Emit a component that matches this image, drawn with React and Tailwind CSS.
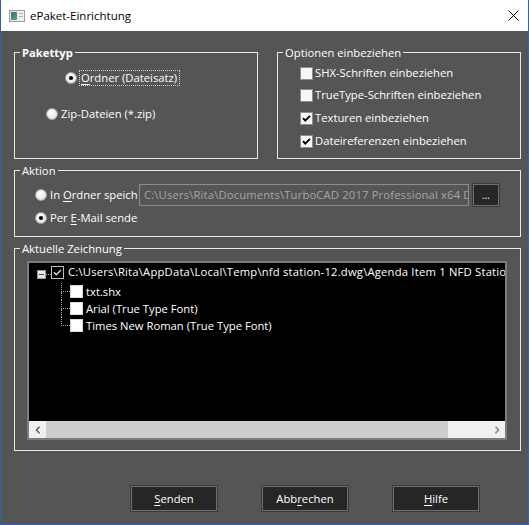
import React from "react";

function Radio({ checked }) {
  return (
    <svg width="12" height="12" viewBox="0 0 12 12" className="shrink-0">
      <defs>
        <radialGradient id="rg" cx="40%" cy="35%" r="70%">
          <stop offset="0%" stopColor="#ffffff" />
          <stop offset="100%" stopColor="#e2e2e2" />
        </radialGradient>
      </defs>
      <circle cx="6" cy="6" r="5.5" fill="url(#rg)" stroke="#9c9c9c" />
      {checked && <circle cx="6" cy="6" r="2.1" fill="#000" />}
    </svg>
  );
}

function Check({ checked }) {
  return (
    <svg width="13" height="13" viewBox="0 0 13 13" className="shrink-0">
      <rect x="0.5" y="0.5" width="12" height="12" fill="#f7f7f7" stroke="#8e8e8e" />
      {checked && (
        <path d="M3 6.2 L5.3 8.6 L10 3.8" fill="none" stroke="#000" strokeWidth="1.9" />
      )}
    </svg>
  );
}

function Group({ label, legendClass, className, children }) {
  return (
    <fieldset className={"border border-[#e8e8e8] " + className}>
      <legend className={"ml-[5px] px-[2px] leading-[15px] " + legendClass}>{label}</legend>
      {children}
    </fieldset>
  );
}

function Button({ children }) {
  return (
    <button className="w-[88px] h-[27px] bg-[#262626] border border-[#3a3a3a] shadow-[inset_0_0_0_1px_#6e6e6e] text-white leading-[25px] text-center">
      {children}
    </button>
  );
}

function ChildNode({ label, last }) {
  return (
    <div className="h-[17px] flex items-center">
      <div className="ml-[32px] w-[9px] h-full flex flex-col">
        <div className="h-[9px] border-l border-b border-dotted border-[#a8a8a8]" />
        {!last && <div className="flex-1 border-l border-dotted border-[#a8a8a8]" />}
      </div>
      <div className="w-[13px] h-[13px] bg-white border border-[#d8d8d8]" />
      <span className="ml-[3px] whitespace-nowrap leading-[16px]">{label}</span>
    </div>
  );
}

export default function App() {
  return (
    <div className="w-[529px] h-[525px] flex flex-col bg-[#555555] border-x border-b border-[#2b63b8] text-white text-[11.25px] font-['Open_Sans',sans-serif]">
      {/* title bar */}
      <div className="h-[31px] shrink-0 bg-white flex items-center pl-[8px] pr-[9px] text-black">
        <svg width="16" height="12" viewBox="0 0 16 12">
          <defs>
            <linearGradient id="ig" x1="0" y1="0" x2="1" y2="1">
              <stop offset="0%" stopColor="#2f6f7a" />
              <stop offset="100%" stopColor="#5fa48c" />
            </linearGradient>
          </defs>
          <rect x="0.5" y="0.5" width="15" height="11" fill="#eeeeee" stroke="#9a9a9a" />
          <rect x="2" y="2" width="6" height="8" fill="url(#ig)" />
          <rect x="10" y="3" width="4" height="1" fill="#b0b0b0" />
          <rect x="10" y="6" width="4" height="1" fill="#b0b0b0" />
        </svg>
        <span className="ml-[5px] text-[11.5px]">ePaket-Einrichtung</span>
        <svg className="ml-auto" width="11" height="11" viewBox="0 0 11 11">
          <path d="M0.5 0.5 L10.5 10.5 M10.5 0.5 L0.5 10.5" stroke="#000" strokeWidth="1" />
        </svg>
      </div>

      {/* dialog body */}
      <div className="flex-1 flex flex-col pl-[13px] pr-[7px]">
        <div className="flex gap-[19px] mt-[14px]">
          <Group label="Pakettyp" legendClass="font-bold" className="w-[244px] h-[114px]">
            <div className="mt-[10px] ml-[50px] flex items-center h-[16px]">
              <Radio checked />
              <span className="ml-[2px] border border-dotted border-[#cfcfcf] pl-px pr-[2px] leading-[14px]">
                <span className="underline underline-offset-2">O</span>rdner (Dateisatz)
              </span>
            </div>
            <div className="mt-[20px] ml-[31px] flex items-center h-[16px]">
              <Radio />
              <span className="ml-[3px] leading-[16px]">Zip-Dateien (*.zip)</span>
            </div>
          </Group>

          <Group label="Optionen einbeziehen" legendClass="" className="w-[244px] h-[114px]">
            <div className="mt-[5px] ml-[22px] flex items-center h-[16px]">
              <Check />
              <span className="ml-[2px]">SHX-Schriften einbeziehen</span>
            </div>
            <div className="mt-[6px] ml-[22px] flex items-center h-[16px]">
              <Check />
              <span className="ml-[2px]">TrueType-Schriften einbeziehen</span>
            </div>
            <div className="mt-[7px] ml-[22px] flex items-center h-[16px]">
              <Check checked />
              <span className="ml-[2px]">Texturen einbeziehen</span>
            </div>
            <div className="mt-[7px] ml-[22px] flex items-center h-[16px]">
              <Check checked />
              <span className="ml-[2px]">Dateireferenzen einbeziehen</span>
            </div>
          </Group>
        </div>

        <Group label="Aktion" legendClass="" className="mt-[4px] h-[74px]">
          <div className="mt-[5px] ml-[20px] flex items-center h-[24px]">
            <Radio />
            <span className="ml-[3px] w-[88px] shrink-0 overflow-hidden whitespace-nowrap">
              In <span className="underline underline-offset-2">O</span>rdner speichern
            </span>
            <div className="ml-[1px] w-[330px] shrink-0 h-[22px] border border-[#8c8c8c] pl-[4px] text-[#a6a6a6] leading-[20px] tracking-[0.15px] overflow-hidden whitespace-nowrap">
              C:\Users\Rita\Documents\TurboCAD 2017 Professional x64 Drawings
            </div>
            <button className="ml-[3px] w-[28px] h-[24px] shrink-0 bg-[#262626] border border-[#3a3a3a] shadow-[inset_0_0_0_1px_#6e6e6e] text-white text-[10px] leading-[20px]">
              ...
            </button>
          </div>
          <div className="mt-[3px] ml-[20px] flex items-center h-[16px]">
            <Radio checked />
            <span className="ml-[3px] w-[88px] overflow-hidden whitespace-nowrap">
              Per <span className="underline underline-offset-2">E</span>-Mail senden
            </span>
          </div>
        </Group>

        <Group label="Aktuelle Zeichnung" legendClass="" className="mt-[4px] h-[210px]">
          <div className="mt-[5px] ml-[12px] w-[480px] h-[179px] border-2 border-[#7c7c7c] bg-black flex flex-col overflow-hidden">
            {/* tree root */}
            <div className="h-[18px] flex items-start shrink-0">
              <div className="ml-[8px] mt-[7px] w-[9px] h-[9px] shrink-0 border border-[#939393] bg-[#e9e9e9] flex items-center justify-center">
                <div className="w-[5px] h-px bg-[#2d4f80]" />
              </div>
              <div className="mt-[11px] w-[5px] shrink-0 border-t border-dotted border-[#a8a8a8]" />
              <svg className="mt-[3px] shrink-0" width="13" height="13" viewBox="0 0 13 13">
                <rect x="0.5" y="0.5" width="12" height="12" fill="#000" stroke="#bdbdbd" />
                <path d="M3 6.3 L5.3 8.7 L10 3.9" fill="none" stroke="#d6d6d6" strokeWidth="1.4" />
              </svg>
              <span className="ml-[4px] whitespace-nowrap leading-[18px] tracking-[0.2px]">
                C:\Users\Rita\AppData\Local\Temp\nfd station-12.dwg\Agenda Item 1 NFD Station
              </span>
            </div>
            <div className="mt-[2px]">
              <ChildNode label="txt.shx" />
              <ChildNode label="Arial (True Type Font)" />
              <ChildNode label="Times New Roman (True Type Font)" last />
            </div>

            {/* horizontal scroll bar */}
            <div className="mt-auto h-[17px] flex shrink-0">
              <div className="w-[17px] bg-[#f0f0f0] flex items-center justify-center">
                <svg width="6" height="8" viewBox="0 0 6 8">
                  <path d="M4.5 0.8 L1.5 4 L4.5 7.2" fill="none" stroke="#606060" strokeWidth="1.6" />
                </svg>
              </div>
              <div className="flex-1 bg-[#cdcdcd]" />
              <div className="w-[40px] bg-[#f0f0f0]" />
              <div className="w-[17px] bg-[#f0f0f0] flex items-center justify-center">
                <svg width="6" height="8" viewBox="0 0 6 8">
                  <path d="M1.5 0.8 L4.5 4 L1.5 7.2" fill="none" stroke="#8a8a8a" strokeWidth="1.6" />
                </svg>
              </div>
            </div>
          </div>
        </Group>

        <div className="mt-[34px] flex pl-[116px] gap-[43px]">
          <Button>
            <span className="underline underline-offset-2">S</span>enden
          </Button>
          <Button>
            Abb<span className="underline underline-offset-2">r</span>echen
          </Button>
          <Button>
            <span className="underline underline-offset-2">H</span>ilfe
          </Button>
        </div>
      </div>
    </div>
  );
}
